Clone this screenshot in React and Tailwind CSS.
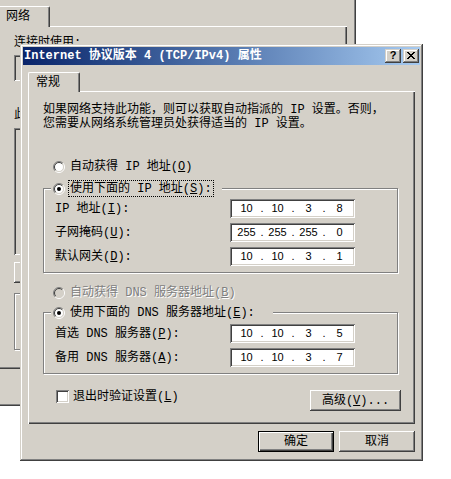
import { Fragment } from "react";

const raised =
  "shadow-[inset_-1px_-1px_0_#404040,inset_1px_1px_0_#d4d0c8,inset_-2px_-2px_0_#808080,inset_2px_2px_0_#ffffff]";
const sunken =
  "shadow-[inset_1px_1px_0_#808080,inset_-1px_-1px_0_#ffffff,inset_2px_2px_0_#404040,inset_-2px_-2px_0_#d4d0c8]";
const btn =
  "shadow-[inset_-1px_-1px_0_#404040,inset_1px_1px_0_#ffffff,inset_-2px_-2px_0_#808080]";
const tabPanel =
  "shadow-[inset_1px_1px_0_#ffffff,inset_-1px_-1px_0_#404040,inset_-2px_-2px_0_#808080]";
const etched = "border border-[#808080] shadow-[inset_1px_1px_0_#ffffff,1px_1px_0_#ffffff]";

function Radio({ checked, disabled }) {
  return (
    <svg width="12" height="12" viewBox="0 0 12 12" className="shrink-0">
      <circle cx="6" cy="6" r="4.5" fill={disabled ? "#d4d0c8" : "#ffffff"} />
      <path d="M9.9 2.1A5.5 5.5 0 0 0 2.1 9.9" fill="none" stroke="#808080" />
      <path d="M2.1 9.9A5.5 5.5 0 0 0 9.9 2.1" fill="none" stroke="#ffffff" />
      <path d="M9.2 2.8A4.5 4.5 0 0 0 2.8 9.2" fill="none" stroke="#404040" />
      <path d="M2.8 9.2A4.5 4.5 0 0 0 9.2 2.8" fill="none" stroke="#d4d0c8" />
      {checked && <circle cx="6" cy="6" r="2" fill="#000000" />}
    </svg>
  );
}

function IpBox({ parts }) {
  return (
    <div
      className={`flex h-[19px] w-[125px] items-center bg-white pl-[4px] font-['Liberation_Sans',sans-serif] text-[11px] ${sunken}`}
    >
      {parts.map((p, i) => (
        <Fragment key={i}>
          <span className="w-[25px] text-center">{p}</span>
          {i < 3 && <span className="w-[6px] text-center">.</span>}
        </Fragment>
      ))}
    </div>
  );
}

function Row({ label, k, parts }) {
  return (
    <div className="flex h-[19px] items-center pl-[11px]">
      <span className="w-[175px] whitespace-nowrap">
        {label}(<span className="underline">{k}</span>):
      </span>
      <IpBox parts={parts} />
    </div>
  );
}

function Legend({ children }) {
  return (
    <div className="-mt-[9px] ml-[7px] flex h-[17px] w-fit items-center bg-[#d4d0c8] pl-[2px] pr-[8px]">
      <Radio checked />
      {children}
    </div>
  );
}

function BackWindow() {
  return (
    <div className="absolute left-[-8px] top-0 h-[406px] w-[364px] bg-[#d4d0c8] shadow-[inset_-1px_-1px_0_#404040,inset_-2px_-2px_0_#808080]">
      <div className="flex pl-[6px] pt-[6px]">
        <div className="relative z-10 -mb-[1px] flex h-[21px] w-[52px] items-center rounded-t-[2px] border-l border-r border-t border-l-white border-r-[#404040] border-t-white bg-[#d4d0c8] pl-[7px] shadow-[inset_-1px_0_0_#808080]">
          网络
        </div>
      </div>
      <div className={`ml-[6px] flex h-[343px] w-[349px] flex-col pl-[16px] pt-[11px] ${tabPanel}`}>
        <div className="leading-[13px]">连接时使用:</div>
        <div className={`mt-[5px] h-[26px] w-[318px] bg-[#d4d0c8] ${sunken}`} />
        <div className="mt-[28px] leading-[13px]">
          此连接使用下列项目(<span className="underline">O</span>):
        </div>
        <div className={`mt-[6px] h-[127px] w-[318px] bg-[#d4d0c8] ${sunken}`} />
        <div className={`mt-[7px] h-[21px] w-[76px] bg-[#d4d0c8] ${btn}`} />
        <div className={`mt-[10px] h-[57px] w-[316px] ${etched}`} />
      </div>
    </div>
  );
}

function TitleBar() {
  return (
    <div className="flex h-[18px] items-start justify-between bg-linear-to-r from-[#0a246a] to-[#a6caf0] pl-[1px] pr-[1px]">
      <div className="pt-[2px] font-['Liberation_Mono','Noto_Sans_CJK_SC',monospace] text-[12px] font-bold leading-[14px] text-white whitespace-nowrap">
        Internet 协议版本 4 (TCP/IPv4) 属性
      </div>
      <div className="mt-[2px] flex gap-[2px]">
        <div
          className={`flex h-[14px] w-[16px] items-center justify-center bg-[#d4d0c8] pb-[1px] font-['Liberation_Sans',sans-serif] text-[11px] font-bold leading-none ${raised}`}
        >
          ?
        </div>
        <div className={`flex h-[14px] w-[16px] items-center justify-center bg-[#d4d0c8] pb-[1px] ${raised}`}>
          <svg width="8" height="7" viewBox="0 0 8 7" shapeRendering="crispEdges">
            <path d="M0 0h2v1h-2zM6 0h2v1h-2zM1 1h2v1h-2zM5 1h2v1h-2zM2 2h4v1h-4zM3 3h2v1h-2zM2 4h4v1h-4zM1 5h2v1h-2zM5 5h2v1h-2zM0 6h2v1h-2zM6 6h2v1h-2z" fill="#000" />
          </svg>
        </div>
      </div>
    </div>
  );
}

function Dialog() {
  return (
    <div className={`absolute left-[20px] top-[44px] flex h-[417px] w-[403px] flex-col bg-[#d4d0c8] p-[3px] ${raised}`}>
      <TitleBar />
      <div className="flex flex-col px-[5px]">
        <div className="mt-[7px] flex">
          <div className="relative z-10 -mb-[1px] flex h-[20px] w-[52px] items-center rounded-t-[2px] border-l border-r border-t border-l-white border-r-[#404040] border-t-white bg-[#d4d0c8] pl-[7px] shadow-[inset_-1px_0_0_#808080]">
            常规
          </div>
        </div>

        <div className={`flex h-[333px] w-[387px] flex-col pl-[15px] pt-[12px] ${tabPanel}`}>
          <div className="whitespace-nowrap leading-[14px]">
            <div>如果网络支持此功能，则可以获取自动指派的 IP 设置。否则，</div>
            <div>您需要从网络系统管理员处获得适当的 IP 设置。</div>
          </div>

          <div className="mt-[28px] flex h-[16px] items-center pl-[10px]">
            <Radio />
            <span className="ml-[5px] whitespace-nowrap">
              自动获得 IP 地址(<span className="underline">O</span>)
            </span>
          </div>

          <div className={`mt-[13px] flex w-[355px] flex-col pb-[6px] ${etched}`}>
            <Legend>
              <span className="ml-[3px] flex h-[17px] items-center border border-dotted border-black px-[1px] whitespace-nowrap">
                使用下面的 IP 地址(<span className="underline">S</span>):
              </span>
            </Legend>
            <div className="mt-[2px] flex flex-col gap-[5px]">
              <Row label="IP 地址" k="I" parts={["10", "10", "3", "8"]} />
              <Row label="子网掩码" k="U" parts={["255", "255", "255", "0"]} />
              <Row label="默认网关" k="D" parts={["10", "10", "3", "1"]} />
            </div>
          </div>

          <div className="mt-[12px] flex h-[16px] items-center pl-[10px]">
            <Radio disabled />
            <span className="ml-[5px] whitespace-nowrap text-[#808080] text-shadow-[1px_1px_0_#ffffff]">
              自动获得 DNS 服务器地址(<span className="underline">B</span>)
            </span>
          </div>

          <div className={`mt-[11px] flex w-[355px] flex-col pb-[6px] ${etched}`}>
            <Legend>
              <span className="ml-[5px] whitespace-nowrap pr-[10px]">
                使用下面的 DNS 服务器地址(<span className="underline">E</span>):
              </span>
            </Legend>
            <div className="mt-[3px] flex flex-col gap-[5px]">
              <Row label="首选 DNS 服务器" k="P" parts={["10", "10", "3", "5"]} />
              <Row label="备用 DNS 服务器" k="A" parts={["10", "10", "3", "7"]} />
            </div>
          </div>

          <div className="mt-[16px] flex w-[358px] items-start justify-between">
            <div className="flex h-[13px] items-center pl-[13px]">
              <div className={`h-[13px] w-[13px] bg-white ${sunken}`} />
              <span className="ml-[4px] whitespace-nowrap">
                退出时验证设置(<span className="underline">L</span>)
              </span>
            </div>
            <div className={`flex h-[21px] w-[91px] items-center justify-center bg-[#d4d0c8] ${btn}`}>
              高级(<span className="underline">V</span>)...
            </div>
          </div>
        </div>

        <div className="mt-[7px] flex justify-end gap-[5px]">
          <div className="flex h-[21px] w-[76px] items-center justify-center border border-black bg-[#d4d0c8] shadow-[inset_1px_1px_0_#ffffff,inset_-1px_-1px_0_#404040,inset_-2px_-2px_0_#808080]">
            确定
          </div>
          <div className={`flex h-[21px] w-[76px] items-center justify-center bg-[#d4d0c8] ${btn}`}>
            取消
          </div>
        </div>
      </div>
    </div>
  );
}

export default function App() {
  return (
    <div className="relative h-[479px] w-[451px] overflow-hidden bg-white font-['Liberation_Mono','Noto_Sans_CJK_SC',monospace] text-[12px] text-black">
      <BackWindow />
      <Dialog />
    </div>
  );
}
